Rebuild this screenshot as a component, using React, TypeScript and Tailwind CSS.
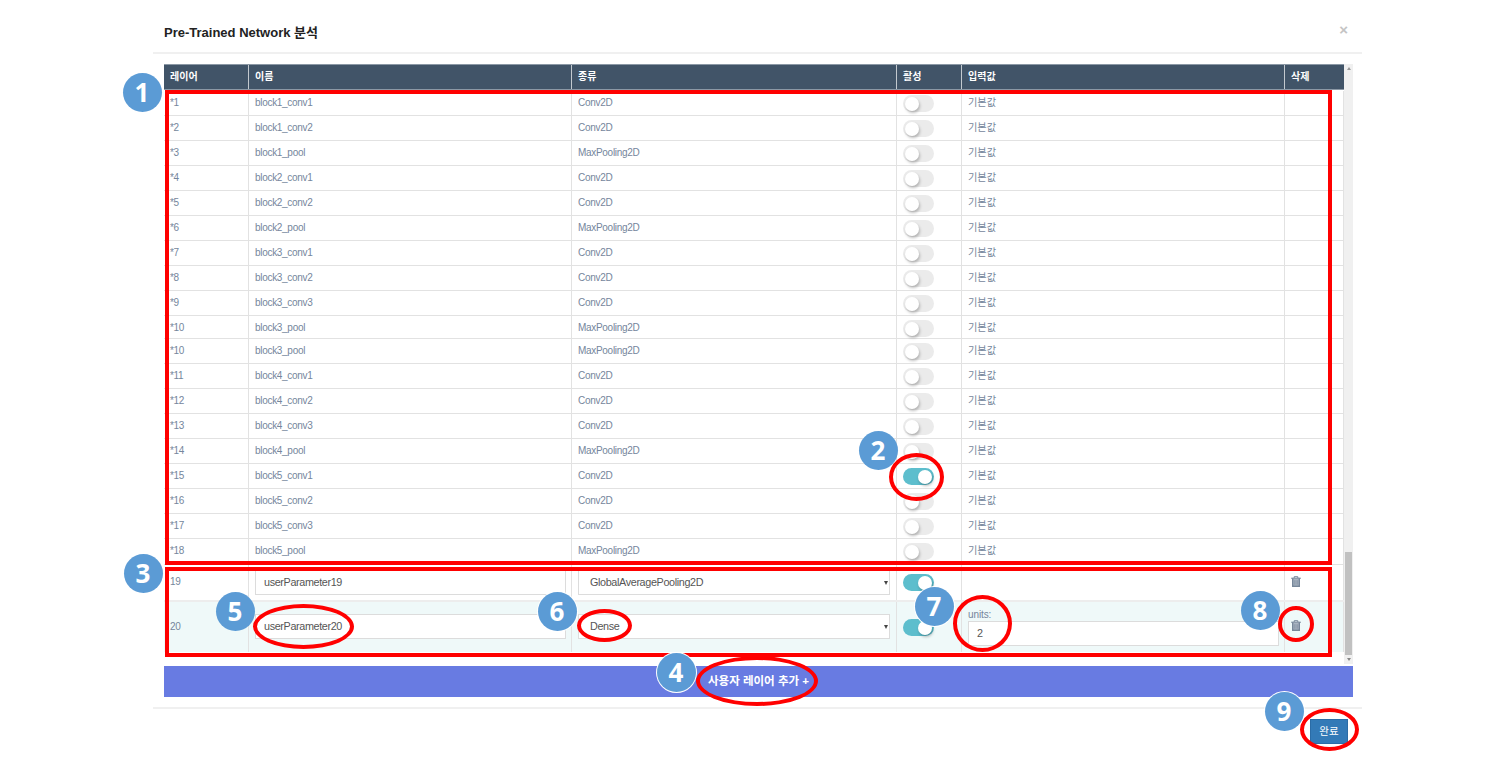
type Layer = { id: string; name: string; kind: string; active?: boolean; height: string };

const H25 = "h-[25px]";
const layers: Layer[] = [
  { id: "*1", name: "block1_conv1", kind: "Conv2D", height: "h-[26px] pt-px" },
  { id: "*2", name: "block1_conv2", kind: "Conv2D", height: H25 },
  { id: "*3", name: "block1_pool", kind: "MaxPooling2D", height: H25 },
  { id: "*4", name: "block2_conv1", kind: "Conv2D", height: H25 },
  { id: "*5", name: "block2_conv2", kind: "Conv2D", height: H25 },
  { id: "*6", name: "block2_pool", kind: "MaxPooling2D", height: H25 },
  { id: "*7", name: "block3_conv1", kind: "Conv2D", height: H25 },
  { id: "*8", name: "block3_conv2", kind: "Conv2D", height: H25 },
  { id: "*9", name: "block3_conv3", kind: "Conv2D", height: H25 },
  { id: "*10", name: "block3_pool", kind: "MaxPooling2D", height: "h-[23px]" },
  { id: "*10", name: "block3_pool", kind: "MaxPooling2D", height: H25 },
  { id: "*11", name: "block4_conv1", kind: "Conv2D", height: H25 },
  { id: "*12", name: "block4_conv2", kind: "Conv2D", height: H25 },
  { id: "*13", name: "block4_conv3", kind: "Conv2D", height: H25 },
  { id: "*14", name: "block4_pool", kind: "MaxPooling2D", height: H25 },
  { id: "*15", name: "block5_conv1", kind: "Conv2D", active: true, height: H25 },
  { id: "*16", name: "block5_conv2", kind: "Conv2D", height: H25 },
  { id: "*17", name: "block5_conv3", kind: "Conv2D", height: H25 },
  { id: "*18", name: "block5_pool", kind: "MaxPooling2D", height: "h-[26px]" },
];

const COLS = "grid grid-cols-[85px_323px_325px_65px_323px_59px]";
const CELL = "border-r border-[#e2e2e2] pl-[6px]";

function Toggle({ on = false }: { on?: boolean }) {
  return (
    <div className={`flex h-[17px] w-[31px] items-center rounded-full px-[2px] ${on ? "justify-end bg-[#5dbecd]" : "justify-start bg-[#ebebeb]"}`}>
      <div className="size-[14px] rounded-full bg-white shadow-[1px_2px_3px_rgba(0,0,0,0.25)]" />
    </div>
  );
}

function LayerRow({ layer }: { layer: Layer }) {
  const text = `${CELL} pt-[5px] leading-[14px]`;
  return (
    <div className={`${COLS} ${layer.height} border-b border-[#e2e2e2]`}>
      <div className={text}>{layer.id}</div>
      <div className={text}>{layer.name}</div>
      <div className={text}>{layer.kind}</div>
      <div className={`${CELL} pt-[4px]`}><Toggle on={layer.active} /></div>
      <div className={`${text} text-[10.2px] tracking-normal`}>기본값</div>
      <div className={CELL} />
    </div>
  );
}

function Field({ value }: { value: string }) {
  return (
    <div className="flex h-[25px] w-[311px] items-center border border-[#dcdcdc] bg-white pl-[8px] text-[10.8px] tracking-[-0.36px] text-[#555]">
      {value}
    </div>
  );
}

function SelectField({ value }: { value: string }) {
  return (
    <div className="flex h-[25px] w-[312px] items-center justify-between border border-[#dcdcdc] bg-white pr-px pl-[11px] text-[10.8px] tracking-[-0.36px] text-[#555]">
      <span>{value}</span>
      <span className="border-x-[2.5px] border-t-[4px] border-x-transparent border-t-[#444]" />
    </div>
  );
}

function Badge({ n, place, outlined = false }: { n: number; place: string; outlined?: boolean }) {
  return (
    <div className={`absolute flex size-[39px] items-center justify-center rounded-full bg-[#5b9bd5] pr-px font-['Open_Sans',sans-serif] text-[26px] font-bold tracking-normal text-white ${outlined ? "ring-1 ring-white" : ""} ${place}`}>
      {n}
    </div>
  );
}

function Ring({ place }: { place: string }) {
  return <div className={`absolute rounded-[50%] border-4 border-[#ff0000] ${place}`} />;
}

function Trash() {
  return (
    <svg viewBox="0 0 10 11" className="h-[11px] w-[10px]" fill="none" stroke="#77879a">
      <path d="M0.3 2.3H9.7" strokeWidth="1.3" />
      <path d="M3.2 2V0.7H6.8V2" strokeWidth="1" />
      <path d="M1.7 2.6V10.2H8.3V2.6" fill="#a9b4c1" strokeWidth="1.4" />
      <path d="M3.9 4.2V8.8M6.1 4.2V8.8" strokeWidth="0.8" />
    </svg>
  );
}

export default function App() {
  return (
    <div className="relative h-[777px] w-[1504px] overflow-hidden bg-white font-['Liberation_Sans','Noto_Sans_CJK_KR',sans-serif] text-[10px] tracking-[-0.3px] text-[#75869c]">
      <div className="ml-[153px] w-[1209px]">
        <header className="flex h-[54px] items-start justify-between border-b-2 border-[#f0f0f0] pr-[14px] pl-[11px]">
          <h1 className="mt-[23px] text-[13px] leading-5 font-bold tracking-normal text-[#222]">Pre-Trained Network 분석</h1>
          <span className="mt-[20px] text-[15px] leading-5 font-bold tracking-normal text-[#c4c4c4]">×</span>
        </header>

        <main className="ml-[11px] w-[1189px] pt-[10px]">
          <div className="flex h-[600px]">
            <div className="w-[1180px]">
              <div className={`${COLS} h-[26px] border-y border-[#8b98a5] bg-[#415468] text-[10px] leading-[23px] font-bold tracking-normal text-white`}>
                {["레이어", "이름", "종류", "활성", "입력값", "삭제"].map((t, i) => (
                  <div key={t} className={`pl-[6px] ${i < 5 ? "border-r border-[#c3c9cf]" : ""}`}>{t}</div>
                ))}
              </div>
              {layers.map((l, i) => <LayerRow key={i} layer={l} />)}

              <div className={`${COLS} h-[37px] border-b-2 border-[#ededed]`}>
                <div className={`${CELL} pt-[10px] leading-[14px]`}>19</div>
                <div className={`${CELL} pt-[5px]`}><Field value="userParameter19" /></div>
                <div className={`${CELL} pt-[5px]`}><SelectField value="GlobalAveragePooling2D" /></div>
                <div className={`${CELL} pt-[9px]`}><Toggle on /></div>
                <div className={CELL} />
                <div className={`${CELL} pt-[11px]`}><Trash /></div>
              </div>

              <div className={`${COLS} h-[50px] bg-[#eff9f9]`}>
                <div className={`${CELL} pt-[18px] leading-[14px]`}>20</div>
                <div className={`${CELL} pt-[12px]`}><Field value="userParameter20" /></div>
                <div className={`${CELL} pt-[12px]`}><SelectField value="Dense" /></div>
                <div className={`${CELL} pt-[17px]`}><Toggle on /></div>
                <div className={`${CELL} pt-[5px]`}>
                  <div className="h-[14px] pt-px leading-[14px] tracking-[-0.1px]">units:</div>
                  <Field value="2" />
                </div>
                <div className={`${CELL} pt-[18px]`}><Trash /></div>
              </div>
            </div>

            <div className="flex w-[9px] flex-col items-center bg-[#f0f0f0]">
              <span className="mt-[3px] border-x-[2px] border-b-[3px] border-x-transparent border-b-[#999]" />
              <div className="mt-[482px] h-[103px] w-[7px] bg-[#c1c1c1]" />
              <span className="mt-[3px] border-x-[2px] border-t-[3px] border-x-transparent border-t-[#888]" />
            </div>
          </div>

          <button className="mt-[2px] flex h-[31px] w-full items-center justify-center bg-[#687be2] text-[11.5px] font-bold tracking-normal text-white">
            사용자 레이어 추가 +
          </button>
        </main>

        <footer className="mt-[10px] flex justify-end border-t-2 border-[#f0f0f0] pt-[10px] pr-[14px]">
          <button className="flex h-[25px] w-[38px] items-center justify-center border border-[#2b6ca6] bg-[#337ab7] pt-px text-[10.5px] tracking-normal text-white">
            완료
          </button>
        </footer>
      </div>

      <div className="absolute top-[90px] left-[165px] h-[475px] w-[1167px] border-4 border-[#ff0000]" />
      <div className="absolute top-[567px] left-[165px] h-[90px] w-[1167px] border-4 border-[#ff0000]" />

      <Ring place="left-[889px] top-[453px] w-[55px] h-[48px]" />
      <Ring place="left-[253px] top-[604px] w-[101px] h-[45px]" />
      <Ring place="left-[577px] top-[609px] w-[55px] h-[33px]" />
      <Ring place="left-[696px] top-[656px] w-[122px] h-[50px]" />
      <Ring place="left-[953px] top-[595px] w-[59px] h-[57px]" />
      <Ring place="left-[1278px] top-[606px] w-[36px] h-[36px]" />
      <Ring place="left-[1300px] top-[708px] w-[59px] h-[43px]" />

      <Badge n={1} place="left-[123px] top-[73px]" />
      <Badge n={2} place="left-[859px] top-[431px]" />
      <Badge n={3} place="left-[124px] top-[554px]" />
      <Badge n={4} place="left-[657px] top-[653px]" outlined />
      <Badge n={5} place="left-[216px] top-[592px]" />
      <Badge n={6} place="left-[538px] top-[592px]" outlined />
      <Badge n={7} place="left-[915px] top-[587px]" outlined />
      <Badge n={8} place="left-[1241px] top-[591px]" />
      <Badge n={9} place="left-[1265px] top-[692px]" outlined />
    </div>
  );
}
